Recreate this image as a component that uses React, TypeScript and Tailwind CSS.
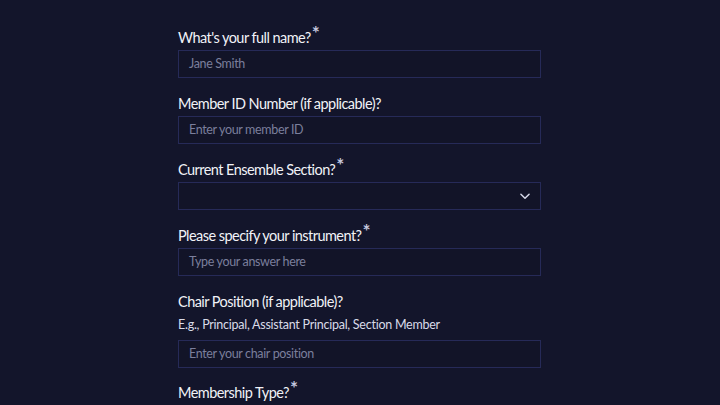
import React from 'react';

const Label: React.FC<{ text: string; required?: boolean }> = ({ text, required }) => (
  <div className="text-[14.5px] leading-[20px] text-[#f1f2f7] tracking-[-0.55px]">
    {text}
    {required && <span className="relative -top-[3px] ml-[1px] text-[#c3c6de] text-[19px] leading-[0] font-bold">*</span>}
  </div>
);

const Field: React.FC<{ placeholder: string }> = ({ placeholder }) => (
  <div className="h-[28px] w-full border border-[#262a58] bg-[#121428] px-[10px] flex items-center">
    <span className="text-[12.5px] text-[#7b7f9c] tracking-[-0.35px] mt-[1px]">{placeholder}</span>
  </div>
);

const App: React.FC = () => {
  return (
    <div
      className="w-[720px] h-[405px] overflow-hidden bg-[#13152b]"
      style={{ fontFamily: 'Lato, "Noto Sans", sans-serif' }}
    >
      <div className="w-[363px] ml-[178px] pt-[28px] flex flex-col">
        <Label text="What's your full name?" required />
        <div className="mt-[2px]"><Field placeholder="Jane Smith" /></div>

        <div className="mt-[16px]"><Label text="Member ID Number (if applicable)?" /></div>
        <div className="mt-[2px]"><Field placeholder="Enter your member ID" /></div>

        <div className="mt-[16px]"><Label text="Current Ensemble Section?" required /></div>
        <div className="mt-[2px] h-[28px] w-full border border-[#262a58] bg-[#121428] px-[8px] flex items-center justify-end">
          <svg width="14" height="14" viewBox="0 0 24 24" fill="none" stroke="#d7d9ea" strokeWidth="2.5" strokeLinecap="round" strokeLinejoin="round">
            <path d="M5 9l7 7 7-7" />
          </svg>
        </div>

        <div className="mt-[16px]"><Label text="Please specify your instrument?" required /></div>
        <div className="mt-[2px]"><Field placeholder="Type your answer here" /></div>

        <div className="mt-[16px]"><Label text="Chair Position (if applicable)?" /></div>
        <div className="mt-[3px] text-[12.5px] leading-[20px] text-[#d9dbe8] tracking-[-0.25px]">
          E.g., Principal, Assistant Principal, Section Member
        </div>
        <div className="mt-[5px]"><Field placeholder="Enter your chair position" /></div>

        <div className="mt-[15px]"><Label text="Membership Type?" required /></div>
      </div>
    </div>
  );
};

export default App;
